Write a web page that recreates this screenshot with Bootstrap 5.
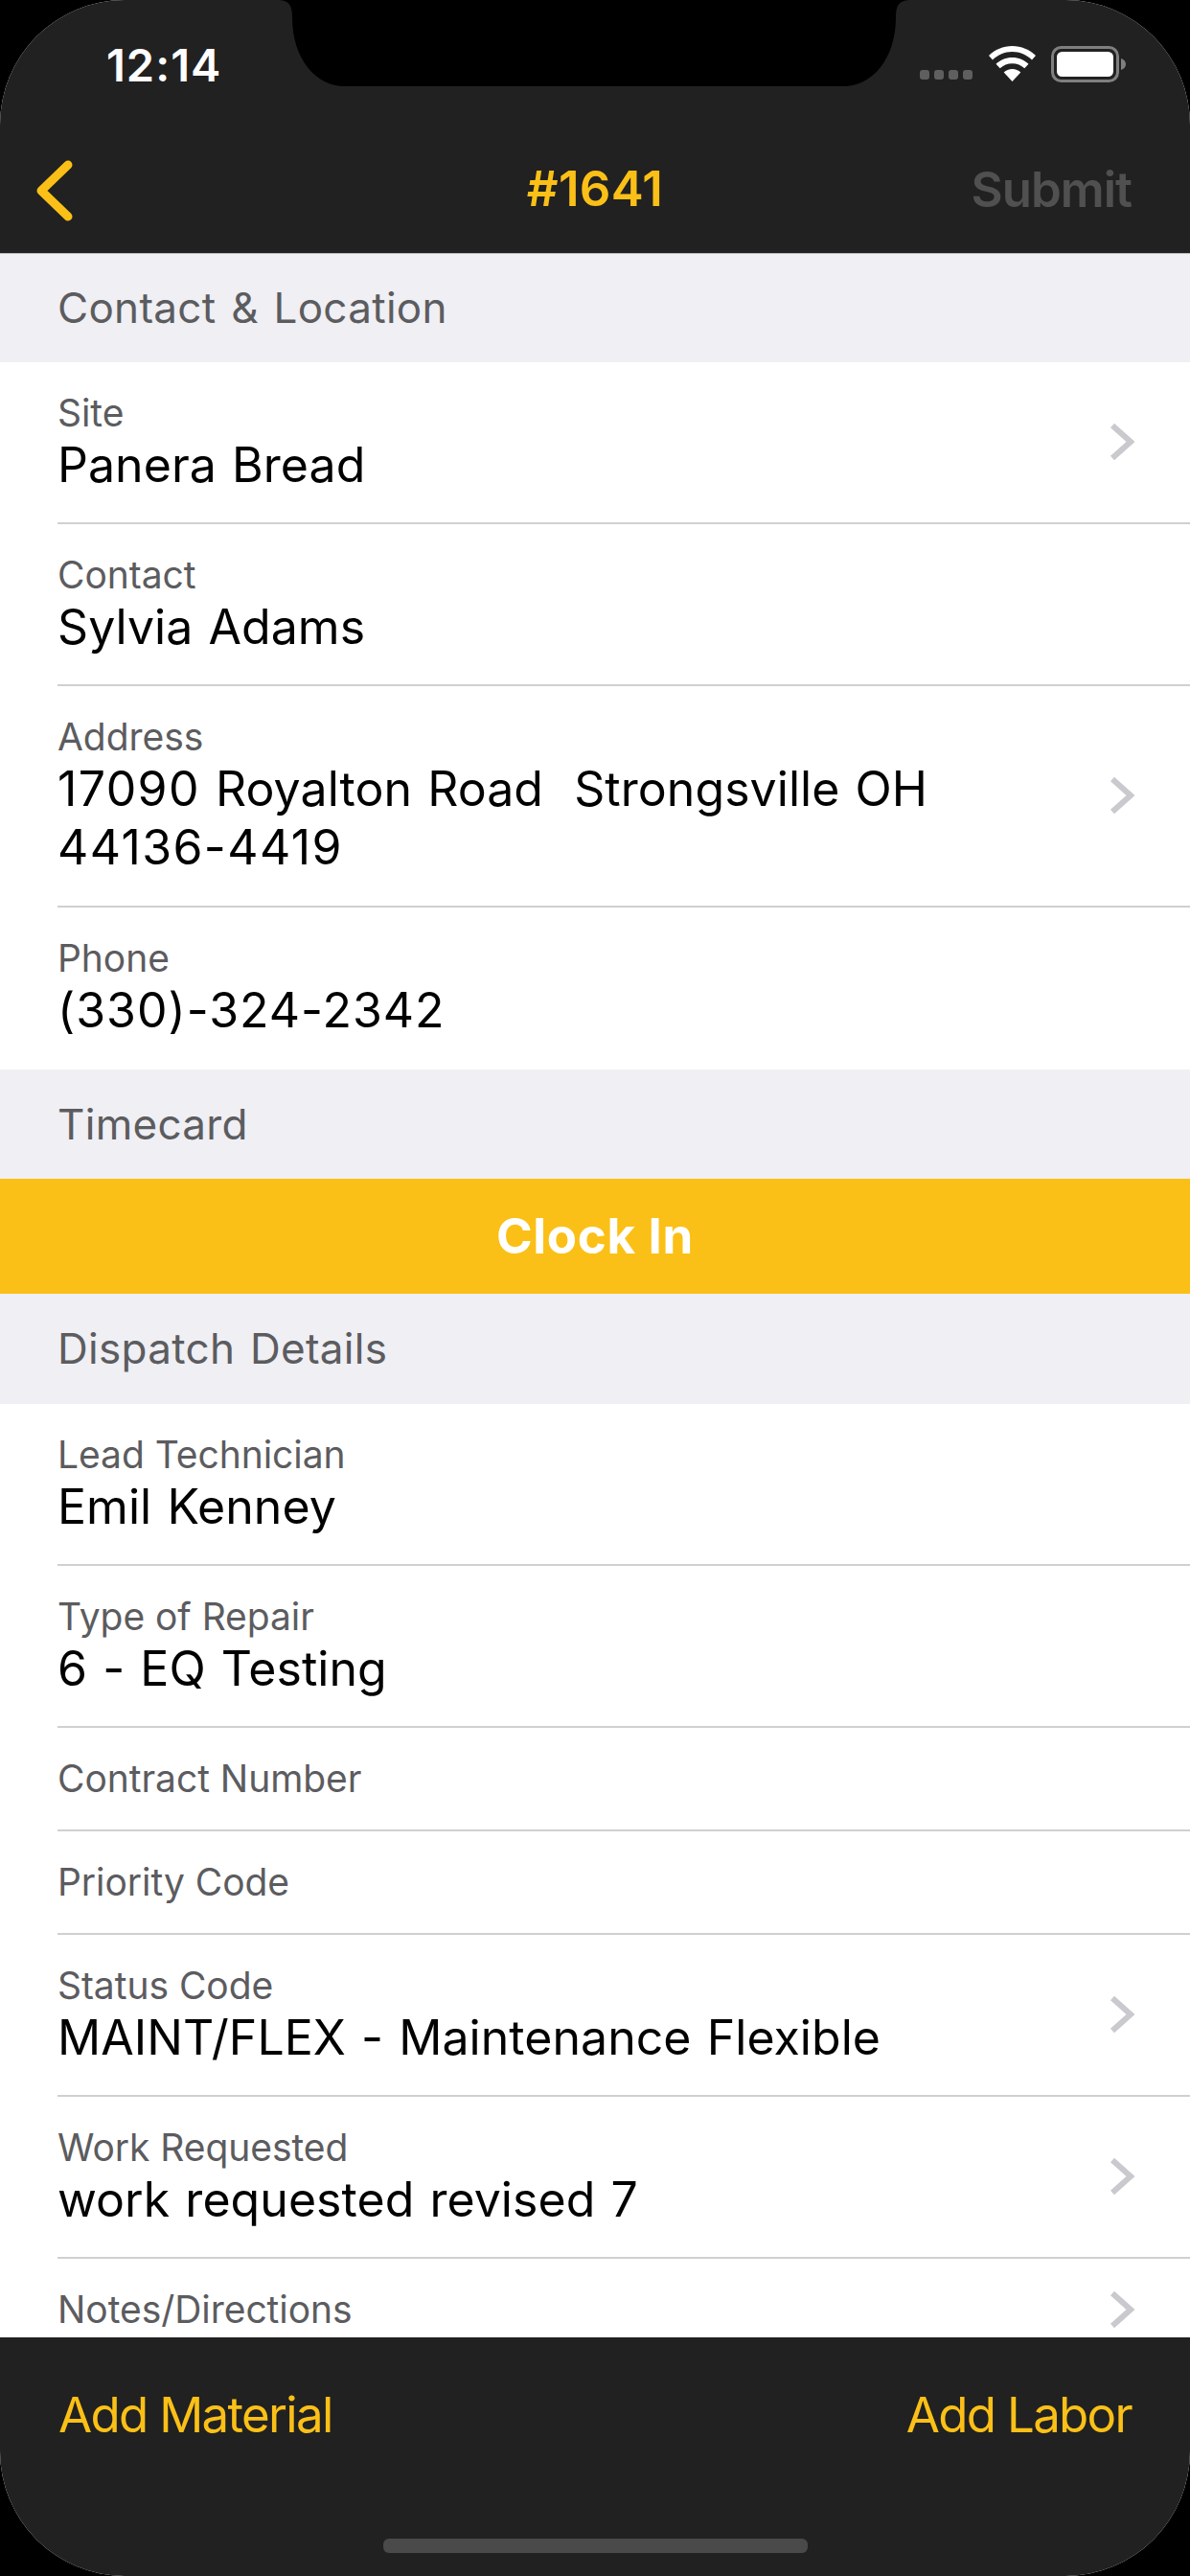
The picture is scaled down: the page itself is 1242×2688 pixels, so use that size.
<!DOCTYPE html>
<html lang="en">
<head>
    <meta charset="UTF-8">
    <title>#1641</title>
    <link href="https://cdn.jsdelivr.net/npm/bootstrap@5.3.3/dist/css/bootstrap.min.css" rel="stylesheet">
    <style>
        html, body { margin: 0; background: #000; }
        body { width: 1242px; height: 2688px; overflow: hidden; font-family: Inter, "Liberation Sans", sans-serif; }
        .phone { width: 1242px; height: 2688px; border-radius: 130px; overflow: hidden; background: #fff; position: relative; }
        .notch { position: absolute; left: 290px; top: 0; width: 660px; height: 90px; }
        .top-bar { height: 264px; background: #212121; flex: none; }
        .status-line { height: 133px; padding: 0 65px 0 111px; }
        .clock { color: #fff; font-size: 47px; font-weight: 600; letter-spacing: 1px; line-height: 1; margin-top: 2px; }
        .dots { gap: 5px; margin-top: 22px; margin-right: 17px; }
        .dots span { width: 10px; height: 10px; border-radius: 3px; background: #5f5f5f; }
        .title-line { height: 131px; padding: 0 61px 0 38px; position: relative; }
        .job-no { color: #fbc017; font-size: 51px; font-weight: 600; letter-spacing: .3px; position: absolute; left: 0; right: 0; text-align: center; line-height: 60px; top: 34px; }
        .submit-btn { color: #505050; font-size: 51px; font-weight: 600; letter-spacing: -1px; line-height: 60px; margin-bottom: 2px; }
        .scroller { flex: 1 1 auto; overflow: hidden; min-height: 0; }
        .sect-head { height: 114px; background: #efeff4; color: #5c5c5f; font-size: 44px; letter-spacing: .3px; word-spacing: 3px; line-height: 114px; padding-left: 60px; }
        .sect-head.first { border-top: 1px solid #bdbdbd; line-height: 112px; }
        .sect-head.tall { height: 115px; }
        .item-row { margin-left: 60px; padding: 28px 58px 30px 0; border-bottom: 2px solid #d0d0d3; background: #fff; }
        .item-row.no-line { border-bottom: 0; padding-bottom: 32px; }
        .item-row.only-label { padding: 28px 58px 29px 0; }
        .item-label { color: #5c5c5f; font-size: 39px; letter-spacing: -.05px; line-height: 49px; }
        .item-value { color: #000; font-size: 50px; letter-spacing: .05px; word-spacing: 2px; line-height: 60px; }
        .addr .item-value { line-height: 61px; }
        .digits { letter-spacing: 1.4px; }
        .phone-no { letter-spacing: 1px; }
        .clock-in { height: 120px; background: #fbc017; color: #fff; font-size: 51px; font-weight: 700; letter-spacing: .7px; line-height: 120px; text-align: center; }
        .bottom-bar { height: 249px; background: #212121; flex: none; padding: 51px 61px 24px; }
        .bottom-bar a { color: #fbc017; font-size: 51px; letter-spacing: -1.7px; line-height: 60px; text-decoration: none; }
        .home-bar { width: 443px; height: 15px; background: #4a4a4a; border-radius: 6px; margin: auto auto 0; }
    </style>
</head>
<body>
<div class="phone d-flex flex-column">
    <div class="top-bar">
        <div class="status-line d-flex justify-content-between align-items-center">
            <div class="clock">12:14</div>
            <div class="d-flex align-items-center">
                <div class="dots d-flex"><span></span><span></span><span></span><span></span></div>
                <svg width="49" height="37" viewBox="0 0 49 37" class="me-3"><path d="M24.500 0C15 0 6.500 3.700 0 10l4 4.500C9.500 9.200 16.500 6 24.500 6s15 3.200 20.500 8.500l4-4.500C42.500 3.700 34 0 24.500 0z" fill="#fff"/><path d="M24.500 12c-6.500 0-12.500 2.600-17 6.800l4.200 4.500c3.400-3.100 7.900-5 12.800-5s9.400 1.900 12.800 5l4.200-4.500C37 14.600 31 12 24.500 12z" fill="#fff"/><path d="M24.500 24c-3.400 0-6.500 1.300-8.800 3.500L24.500 37l8.800-9.500C31 25.300 27.900 24 24.500 24z" fill="#fff"/></svg>
                <svg width="80" height="38" viewBox="0 0 80 38"><rect x="1.500" y="1.500" width="68" height="35" rx="9" fill="none" stroke="#7f7f7f" stroke-width="3"/><rect x="6" y="6" width="59" height="26" rx="5.500" fill="#fff"/><path d="M73 13c3 1 5 3 5 6s-2 5-5 6z" fill="#7f7f7f"/></svg>
            </div>
        </div>
        <div class="title-line d-flex justify-content-between align-items-center">
            <svg width="38" height="64" viewBox="0 0 38 64"><path d="M33 5 5 32l28 27" fill="none" stroke="#fbc017" stroke-width="9" stroke-linecap="round" stroke-linejoin="round"/></svg>
            <div class="job-no">#1641</div>
            <div class="submit-btn">Submit</div>
        </div>
    </div>

    <div class="scroller">
        <div class="sect-head first">Contact &amp; Location</div>
        <div class="item-row d-flex justify-content-between align-items-center">
            <div><div class="item-label">Site</div><div class="item-value">Panera Bread</div></div>
            <svg width="26" height="38" viewBox="0 0 26 38"><path d="M3 2l19 17L3 36" fill="none" stroke="#c9c9ce" stroke-width="6"/></svg>
        </div>
        <div class="item-row">
            <div class="item-label">Contact</div><div class="item-value">Sylvia Adams</div>
        </div>
        <div class="item-row d-flex justify-content-between align-items-center">
            <div class="addr"><div class="item-label">Address</div><div class="item-value"><span class="digits">17090</span> Royalton Road&nbsp; Strongsville OH<br><span class="digits">44136-4419</span></div></div>
            <svg width="26" height="38" viewBox="0 0 26 38"><path d="M3 2l19 17L3 36" fill="none" stroke="#c9c9ce" stroke-width="6"/></svg>
        </div>
        <div class="item-row no-line">
            <div class="item-label">Phone</div><div class="item-value phone-no">(330)-324-2342</div>
        </div>

        <div class="sect-head">Timecard</div>
        <div class="clock-in">Clock In</div>

        <div class="sect-head tall">Dispatch Details</div>
        <div class="item-row">
            <div class="item-label">Lead Technician</div><div class="item-value">Emil Kenney</div>
        </div>
        <div class="item-row">
            <div class="item-label">Type of Repair</div><div class="item-value">6 - EQ Testing</div>
        </div>
        <div class="item-row only-label"><div class="item-label">Contract Number</div></div>
        <div class="item-row only-label"><div class="item-label">Priority Code</div></div>
        <div class="item-row d-flex justify-content-between align-items-center">
            <div><div class="item-label">Status Code</div><div class="item-value">MAINT/FLEX - Maintenance Flexible</div></div>
            <svg width="26" height="38" viewBox="0 0 26 38"><path d="M3 2l19 17L3 36" fill="none" stroke="#c9c9ce" stroke-width="6"/></svg>
        </div>
        <div class="item-row d-flex justify-content-between align-items-center">
            <div><div class="item-label">Work Requested</div><div class="item-value">work requested revised 7</div></div>
            <svg width="26" height="38" viewBox="0 0 26 38"><path d="M3 2l19 17L3 36" fill="none" stroke="#c9c9ce" stroke-width="6"/></svg>
        </div>
        <div class="item-row only-label d-flex justify-content-between align-items-center">
            <div class="item-label">Notes/Directions</div>
            <svg width="26" height="38" viewBox="0 0 26 38"><path d="M3 2l19 17L3 36" fill="none" stroke="#c9c9ce" stroke-width="6"/></svg>
        </div>
    </div>

    <div class="bottom-bar d-flex flex-column">
        <div class="d-flex justify-content-between">
            <a href="#">Add Material</a>
            <a href="#">Add Labor</a>
        </div>
        <div class="home-bar"></div>
    </div>

    <svg class="notch" viewBox="0 0 660 90"><path d="M0 0H660C648 0 645 6 645 18 645 62 620 90 590 90H70C40 90 15 62 15 18 15 6 12 0 0 0z" fill="#000"/></svg>
</div>
</body>
</html>
